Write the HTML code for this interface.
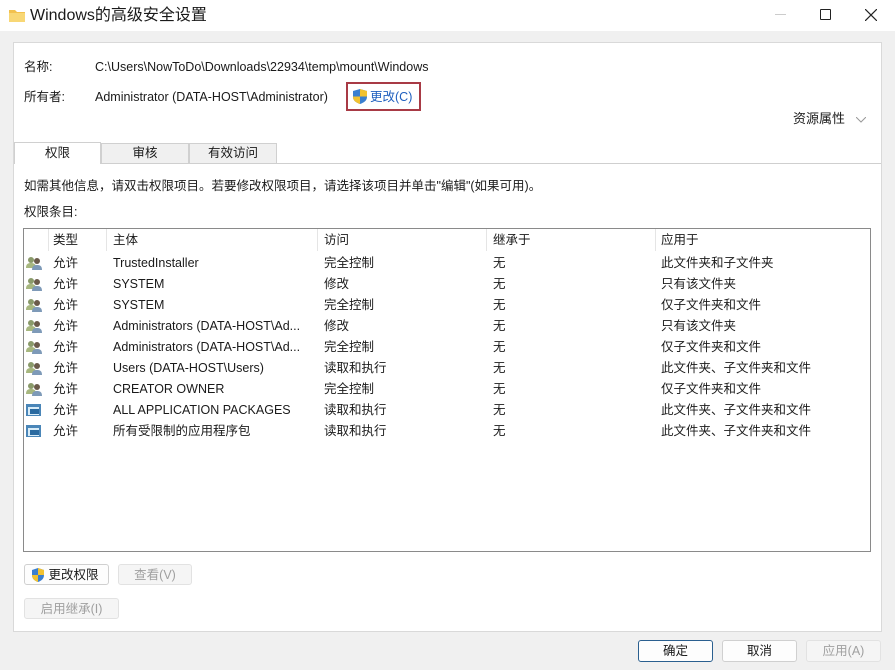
<!DOCTYPE html>
<html><head><meta charset="utf-8"><style>
*{margin:0;padding:0;box-sizing:border-box}
body{width:895px;height:670px;background:#f0f0f0;font-family:"Liberation Sans","Noto Sans CJK SC",sans-serif;font-size:12.5px;color:#1a1a1a;position:relative;overflow:hidden}
.a{position:absolute;white-space:nowrap;line-height:16px}
.btn{position:absolute;border:1px solid #d0d0d0;border-radius:3px;background:#fdfdfd;text-align:center;font-size:12.5px;line-height:20px}
.dis{color:#a0a0a0;background:#f5f5f5;border-color:#e2e2e2}
.row{position:absolute;left:0;width:846px;height:21px;line-height:21px}
.row span{position:absolute}
</style></head><body>
<div class="a" style="left:0;top:0;width:895px;height:31px;background:#fff"></div>
<svg class="a" style="left:9px;top:8px" width="16" height="14"><path d="M0 2h6l2 2h8v10H0z" fill="#f2c14e"/><path d="M0 5h16v9H0z" fill="#f8d775"/></svg>
<div class="a" style="left:30px;top:6px;font-size:16px;line-height:20px">Windows的高级安全设置</div>
<div class="a" style="left:775px;top:14px;width:11px;height:1px;background:#ccc"></div>
<div class="a" style="left:820px;top:9px;width:11px;height:11px;border:1.3px solid #222;border-radius:1px"></div>
<svg class="a" style="left:865px;top:9px" width="12" height="12"><path d="M0 0L12 12M12 0L0 12" stroke="#222" stroke-width="1.2"/></svg>
<div class="a" style="left:13px;top:42px;width:869px;height:590px;background:#fff;border:1px solid #d9d9d9"></div>
<div class="a" style="left:24px;top:59px">名称:</div>
<div class="a" style="left:95px;top:59px">C:\Users\NowToDo\Downloads\22934\temp\mount\Windows</div>
<div class="a" style="left:24px;top:89px">所有者:</div>
<div class="a" style="left:95px;top:89px">Administrator (DATA-HOST\Administrator)</div>
<div class="a" style="left:346px;top:82px;width:75px;height:29px;border:2px solid #a83a45"></div>
<svg class="a" style="left:353px;top:89px" width="14" height="15"><path d="M7 0L14 2V8C14 12 10 14 7 15C4 14 0 12 0 8V2Z" fill="#3a7fd0"/><path d="M7 0L14 2V7.5H7ZM0 7.5H7V15C4 14 0 12 0 8Z" fill="#f2c230"/></svg>
<div class="a" style="left:370px;top:89px;color:#1f5fbf">更改(C)</div>
<div class="a" style="left:793px;top:111px;font-size:13px">资源属性</div>
<svg class="a" style="left:856px;top:117px" width="10" height="6"><path d="M0 0L5 5L10 0" stroke="#999" fill="none"/></svg>
<div class="a" style="left:14px;top:163px;width:867px;height:1px;background:#cfcfcf"></div>
<div class="a" style="left:14px;top:142px;width:87px;height:22px;background:#fff;border:1px solid #d0d0d0;border-bottom:none;text-align:center;line-height:21px">权限</div>
<div class="a" style="left:101px;top:143px;width:88px;height:20px;background:#f0f0f0;border:1px solid #d0d0d0;border-bottom:none;text-align:center;line-height:19px">审核</div>
<div class="a" style="left:189px;top:143px;width:88px;height:20px;background:#f0f0f0;border:1px solid #d0d0d0;border-bottom:none;text-align:center;line-height:19px">有效访问</div>
<div class="a" style="left:24px;top:178px">如需其他信息，请双击权限项目。若要修改权限项目，请选择该项目并单击"编辑"(如果可用)。</div>
<div class="a" style="left:24px;top:204px">权限条目:</div>
<div class="a" style="left:23px;top:228px;width:848px;height:324px;border:1px solid #8a8a8a;background:#fff">
<div class="row" style="top:1px"><span style="left:29px">类型</span><span style="left:89px">主体</span><span style="left:300px">访问</span><span style="left:469px">继承于</span><span style="left:637px">应用于</span></div>
<div class="a" style="left:24px;top:0;width:1px;height:22px;background:#e5e5e5"></div>
<div class="a" style="left:82px;top:0;width:1px;height:22px;background:#e5e5e5"></div>
<div class="a" style="left:293px;top:0;width:1px;height:22px;background:#e5e5e5"></div>
<div class="a" style="left:462px;top:0;width:1px;height:22px;background:#e5e5e5"></div>
<div class="a" style="left:631px;top:0;width:1px;height:22px;background:#e5e5e5"></div>
<div class="row" style="top:24px"><span style="left:29px">允许</span><span style="left:89px">TrustedInstaller</span><span style="left:300px">完全控制</span><span style="left:469px">无</span><span style="left:637px">此文件夹和子文件夹</span></div>
<div class="row" style="top:45px"><span style="left:29px">允许</span><span style="left:89px">SYSTEM</span><span style="left:300px">修改</span><span style="left:469px">无</span><span style="left:637px">只有该文件夹</span></div>
<div class="row" style="top:66px"><span style="left:29px">允许</span><span style="left:89px">SYSTEM</span><span style="left:300px">完全控制</span><span style="left:469px">无</span><span style="left:637px">仅子文件夹和文件</span></div>
<div class="row" style="top:87px"><span style="left:29px">允许</span><span style="left:89px">Administrators (DATA-HOST\Ad...</span><span style="left:300px">修改</span><span style="left:469px">无</span><span style="left:637px">只有该文件夹</span></div>
<div class="row" style="top:108px"><span style="left:29px">允许</span><span style="left:89px">Administrators (DATA-HOST\Ad...</span><span style="left:300px">完全控制</span><span style="left:469px">无</span><span style="left:637px">仅子文件夹和文件</span></div>
<div class="row" style="top:129px"><span style="left:29px">允许</span><span style="left:89px">Users (DATA-HOST\Users)</span><span style="left:300px">读取和执行</span><span style="left:469px">无</span><span style="left:637px">此文件夹、子文件夹和文件</span></div>
<div class="row" style="top:150px"><span style="left:29px">允许</span><span style="left:89px">CREATOR OWNER</span><span style="left:300px">完全控制</span><span style="left:469px">无</span><span style="left:637px">仅子文件夹和文件</span></div>
<div class="row" style="top:171px"><span style="left:29px">允许</span><span style="left:89px">ALL APPLICATION PACKAGES</span><span style="left:300px">读取和执行</span><span style="left:469px">无</span><span style="left:637px">此文件夹、子文件夹和文件</span></div>
<div class="row" style="top:192px"><span style="left:29px">允许</span><span style="left:89px">所有受限制的应用程序包</span><span style="left:300px">读取和执行</span><span style="left:469px">无</span><span style="left:637px">此文件夹、子文件夹和文件</span></div>
</div>
<svg class="a" style="left:26px;top:256px" width="17" height="150">
<defs><g id="u"><circle cx="5" cy="4" r="3" fill="#8a9a6a"/><path d="M0 12C0 8 2 7 5 7S10 8 10 12Z" fill="#a7b77f"/><circle cx="11" cy="5" r="3" fill="#6a5a4a"/><path d="M6 14C6 10 8 9 11 9S16 10 16 14Z" fill="#7e9ab8"/></g></defs>
<use href="#u" y="0"/><use href="#u" y="21"/><use href="#u" y="42"/><use href="#u" y="63"/><use href="#u" y="84"/><use href="#u" y="105"/><use href="#u" y="126"/>
</svg>
<svg class="a" style="left:26px;top:404px" width="17" height="36">
<defs><g id="p"><rect x="0" y="0" width="15" height="12" fill="#4a86b8"/><rect x="2" y="3" width="11" height="8" fill="#d8ecf8"/><rect x="4" y="5" width="9" height="5" fill="#2a6aa0"/></g></defs>
<use href="#p" y="0"/><use href="#p" y="21"/>
</svg>
<div class="btn" style="left:24px;top:564px;width:85px;height:21px"><svg style="position:absolute;left:7px;top:3px" width="12" height="14"><path d="M6 0L12 2V7C12 11 9 13 6 14C3 13 0 11 0 7V2Z" fill="#3a7fd0"/><path d="M6 0L12 2V7H6ZM0 7H6V14C3 13 0 11 0 7Z" fill="#f2c230"/></svg><span style="margin-left:14px">更改权限</span></div>
<div class="btn dis" style="left:118px;top:564px;width:74px;height:21px">查看(V)</div>
<div class="btn dis" style="left:24px;top:598px;width:95px;height:21px">启用继承(I)</div>
<div class="btn" style="left:638px;top:640px;width:75px;height:22px;border:1px solid #2a5f8f">确定</div>
<div class="btn" style="left:722px;top:640px;width:75px;height:22px">取消</div>
<div class="btn dis" style="left:806px;top:640px;width:75px;height:22px">应用(A)</div>
</body></html>
